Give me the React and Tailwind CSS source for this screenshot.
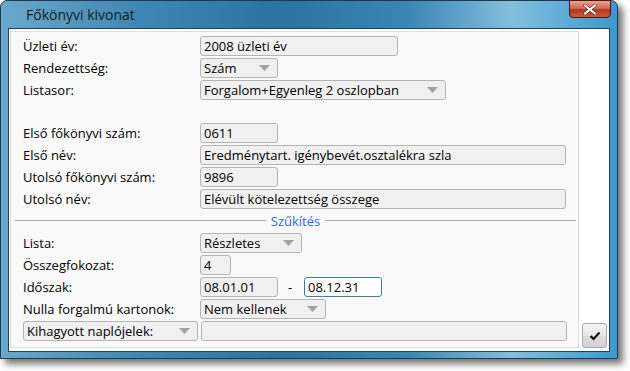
import React from 'react';

const FONT = { fontFamily: '"Open Sans", "Noto Sans", sans-serif' };

const Arrow = () => (
  <svg width="11" height="6" viewBox="0 0 11 6" className="shrink-0">
    <path d="M0 0 H11 L5.5 6 Z" fill="#a3a3a3" />
  </svg>
);

const Field = ({ w, value, focus }) => (
  <div
    className={`h-[20px] flex items-center px-[3px] rounded-[3px] border text-[13px] leading-[18px] ${
      focus ? 'border-[#3c7fb1] bg-white' : 'border-[#b4b4b4] bg-[#f0f0f0]'
    } ${w}`}
  >
    <span className="whitespace-nowrap">{value}</span>
  </div>
);

const Select = ({ w, value }) => (
  <div className={`h-[20px] flex items-center justify-between pl-[3px] pr-[7px] rounded-[3px] border border-[#b4b4b4] bg-[#f0f0f0] text-[13px] leading-[18px] ${w}`}>
    <span className="whitespace-nowrap">{value}</span>
    <Arrow />
  </div>
);

const Row = ({ label, children }) => (
  <div className="h-[22px] flex items-start">
    <div className="w-[177px] shrink-0 h-[20px] flex items-center text-[13px] leading-[18px] whitespace-nowrap">{label}</div>
    <div className="flex items-center gap-[10px]">{children}</div>
  </div>
);

export default function App() {
  return (
    <div className="w-[630px] h-[371px] bg-white relative overflow-hidden" style={FONT}>
      {/* window */}
      <div className="w-[618px] h-[359px] rounded-t-[7px] border border-[#23384d] flex flex-col bg-[linear-gradient(90deg,#6aa8cc_0%,#3f88b5_22%,#2b73a0_45%,#3a86b5_66%,#84bfdd_83%,#3a99cf_100%)] shadow-[5px_5px_7px_rgba(0,0,0,0.55)]">
        {/* title bar */}
        <div className="h-[27px] shrink-0 flex items-start justify-between pl-[25px] pr-[6px]">
          <div className="mt-[5px] text-[14px] text-[#1b1b1b] leading-[18px]">Főkönyvi kivonat</div>
          <div className="w-[42px] h-[18px] -mt-px rounded-b-[4px] border border-[#4b1a12] bg-[linear-gradient(180deg,#e7a394_0%,#cf6a55_45%,#b2361e_55%,#c85a3f_100%)] flex items-center justify-center">
            <svg width="14" height="11" viewBox="0 0 14 11">
              <path d="M2 1.5 L12 9.5 M12 1.5 L2 9.5" stroke="#5a2a22" strokeWidth="3.4" strokeLinecap="square" />
              <path d="M2 1.5 L12 9.5 M12 1.5 L2 9.5" stroke="#ffffff" strokeWidth="2" strokeLinecap="square" />
            </svg>
          </div>
        </div>
        {/* client */}
        <div className="mx-[7px] h-[324px] border border-[#243f58] bg-white flex">
          <div className="ml-[1px] mt-[2px] w-[569px] h-[317px] border border-[#dedede] bg-[#f9f9f9] pl-[12px] pt-[4px] flex flex-col text-black">
            <Row label="Üzleti év:"><Field w="w-[198px]" value="2008 üzleti év" /></Row>
            <Row label="Rendezettség:"><Select w="w-[78px]" value="Szám" /></Row>
            <Row label="Listasor:"><Select w="w-[246px]" value="Forgalom+Egyenleg 2 oszlopban" /></Row>
            <div className="h-[21px]" />
            <Row label="Első főkönyvi szám:"><Field w="w-[78px]" value="0611" /></Row>
            <Row label="Első név:"><Field w="w-[366px]" value="Eredménytart. igénybevét.osztalékra szla" /></Row>
            <Row label="Utolsó főkönyvi szám:"><Field w="w-[78px]" value="9896" /></Row>
            <Row label="Utolsó név:"><Field w="w-[366px]" value="Elévült kötelezettség összege" /></Row>
            <div className="h-[22px] flex items-center -ml-[8px] mr-[2px] pb-[3px]">
              <div className="flex-1 h-px bg-[#a9a9a9]" />
              <div className="px-[5px] text-[13px] text-[#3366f2] leading-[18px]">Szűkítés</div>
              <div className="flex-1 h-px bg-[#a9a9a9]" />
            </div>
            <Row label="Lista:"><Select w="w-[102px]" value="Részletes" /></Row>
            <Row label="Összegfokozat:"><Field w="w-[31px]" value="4" /></Row>
            <Row label="Időszak:">
              <Field w="w-[78px]" value="08.01.01" />
              <span className="text-[13px] w-[6px] leading-[18px]">-</span>
              <Field w="w-[78px]" value="08.12.31" focus />
            </Row>
            <Row label="Nulla forgalmú kartonok:"><Select w="w-[126px]" value="Nem kellenek" /></Row>
            <div className="h-[22px] flex items-start gap-[3px]">
              <Select w="w-[175px]" value="Kihagyott naplójelek:" />
              <Field w="w-[366px]" value="" />
            </div>
          </div>
          <div className="flex-1 flex items-end justify-center pb-[3px] pl-[1px]">
            <button className="w-[25px] h-[25px] rounded-[3px] border border-[#a9a9a9] bg-[linear-gradient(180deg,#f4f4f4_0%,#e8e8e8_50%,#dcdcdc_51%,#d4d4d4_100%)] flex items-center justify-center">
              <svg width="12" height="10" viewBox="0 0 12 10">
                <path d="M1.5 5 L4.5 8 L10.5 1.5" stroke="#111" strokeWidth="2.2" fill="none" />
              </svg>
            </button>
          </div>
        </div>
      </div>
    </div>
  );
}
